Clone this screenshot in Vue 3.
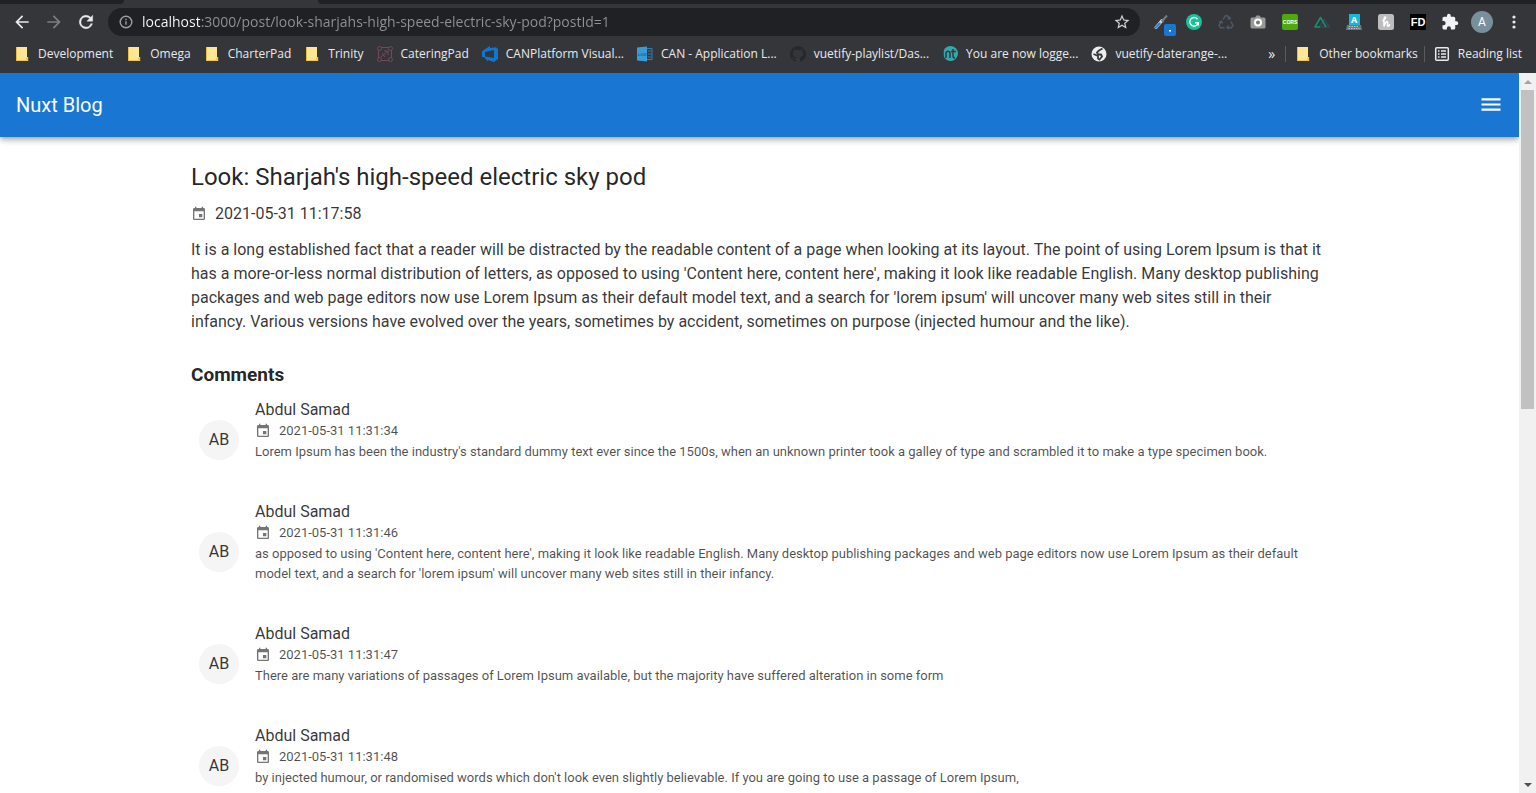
<script setup>
import { ref } from 'vue'

const address = ref('localhost:3000/post/look-sharjahs-high-speed-electric-sky-pod?postId=1')

const bookmarks = [
  { label: 'Development', icon: 'folder' },
  { label: 'Omega', icon: 'folder' },
  { label: 'CharterPad', icon: 'folder' },
  { label: 'Trinity', icon: 'folder' },
  { label: 'CateringPad', icon: 'catering' },
  { label: 'CANPlatform Visual...', icon: 'devops' },
  { label: 'CAN - Application L...', icon: 'log' },
  { label: 'vuetify-playlist/Das...', icon: 'github' },
  { label: 'You are now logge...', icon: 'nt' },
  { label: 'vuetify-daterange-...', icon: 'globe' },
]

const extensions = ['picker', 'grammarly', 'recycle', 'camera', 'cors', 'nuxt', 'keyboard', 'honey', 'fd', 'puzzle']

const calendarPath =
  'M19,19H5V8H19M16,1V3H8V1H6V3H5C3.89,3 3,3.89 3,5V19A2,2 0 0,0 5,21H19A2,2 0 0,0 21,19V5C21,3.89 20.1,3 19,3H18V1M17,12H12V17H17V12Z'

const comments = [
  {
    name: 'Abdul Samad',
    date: '2021-05-31 11:31:34',
    text: "Lorem Ipsum has been the industry's standard dummy text ever since the 1500s, when an unknown printer took a galley of type and scrambled it to make a type specimen book.",
  },
  {
    name: 'Abdul Samad',
    date: '2021-05-31 11:31:46',
    text: "as opposed to using 'Content here, content here', making it look like readable English. Many desktop publishing packages and web page editors now use Lorem Ipsum as their default model text, and a search for 'lorem ipsum' will uncover many web sites still in their infancy.",
  },
  {
    name: 'Abdul Samad',
    date: '2021-05-31 11:31:47',
    text: 'There are many variations of passages of Lorem Ipsum available, but the majority have suffered alteration in some form',
  },
  {
    name: 'Abdul Samad',
    date: '2021-05-31 11:31:48',
    text: "by injected humour, or randomised words which don't look even slightly believable. If you are going to use a passage of Lorem Ipsum,",
  },
]
</script>

<template>
  <div class="window">
    <header class="chrome">
      <div class="tabs"><span class="tab-left"></span><span class="tab-right"></span></div>
      <div class="toolbar">
        <nav class="nav" aria-label="History">
          <button class="tool" aria-label="Back">
            <svg width="20" height="20" viewBox="0 0 24 24"><path fill="#e8eaed" d="M20 11H7.8l5.6-5.6L12 4l-8 8 8 8 1.4-1.4L7.800 13H20z" /></svg>
          </button>
          <button class="tool" aria-label="Forward">
            <svg width="20" height="20" viewBox="0 0 24 24"><path fill="#7d7e81" d="M4 11h12.200l-5.600-5.600L12 4l8 8-8 8-1.400-1.400 5.600-5.600H4z" /></svg>
          </button>
          <button class="tool" aria-label="Reload">
            <svg width="20" height="20" viewBox="0 0 24 24"><path fill="#e8eaed" stroke="#e8eaed" stroke-width=".5" d="M17.650 6.350A8 8 0 1 0 19.730 14h-2.080A6 6 0 1 1 12 6c1.660 0 3.140.690 4.220 1.780L13 11h7V4z" /></svg>
          </button>
        </nav>
        <div class="omnibox">
          <svg width="16" height="16" viewBox="0 0 16 16"><circle cx="8" cy="8" r="5.800" fill="none" stroke="#9aa0a6" stroke-width="1.400" /><path fill="#9aa0a6" d="M7.300 7.200h1.400v3.600H7.300zM7.300 4.800h1.400v1.400H7.300z" /></svg>
          <input v-model="address" class="address" type="text" aria-label="Address" spellcheck="false" />
          <button class="star" aria-label="Bookmark this page">
            <svg width="18" height="18" viewBox="0 0 24 24"><path fill="#d0d2d5" d="M22 9.240l-7.190-.620L12 2 9.190 8.630 2 9.240l5.460 4.730L5.820 21 12 17.270 18.180 21l-1.630-7.030zM12 15.400l-3.760 2.270 1-4.280-3.320-2.880 4.380-.380L12 6.100l1.710 4.040 4.380.380-3.320 2.880 1 4.280z" /></svg>
          </button>
        </div>
        <div class="extensions">
          <button v-for="ext in extensions" :key="ext" class="tool" :aria-label="ext">
            <svg v-if="ext === 'picker'" width="28" height="28" viewBox="0 0 28 28"><path d="M8 19.500L14 12.500" stroke="#c9e2f7" stroke-width="3" stroke-linecap="round" /><path d="M8 19.500L11.500 15.500" stroke="#3b82c4" stroke-width="2.400" stroke-linecap="round" /><path d="M13.500 12l2 2M15 12l4-4.500" stroke="#777b7e" stroke-width="2" /><rect x="16" y="16" width="12" height="12" rx="2" fill="#1976d2" /><path d="M21 22h2v1.500h-2z" fill="#fff" /></svg>
            <svg v-else-if="ext === 'grammarly'" width="16" height="16" viewBox="0 0 16 16"><circle cx="8" cy="8" r="8" fill="#15c39a" /><path d="M11.500 5.200A4.300 4.300 0 1 0 12.300 8.700H9M12.300 8.700v2.800" fill="none" stroke="#fff" stroke-width="1.400" /></svg>
            <svg v-else-if="ext === 'recycle'" width="16" height="16" viewBox="0 0 16 16"><path d="M5 5.500L7.500 1.800h2L11.500 5M9.500 5H12V2.500M13 7.500l2 4-1.500 2.200H9.500M11 11.500l-2 2 2 1.500M6.500 13.700h-4L1 11.500l2.200-4M1 8.200l2.400-1 1.200 2.300" fill="none" stroke="#4b5867" stroke-width="1.500" /></svg>
            <svg v-else-if="ext === 'camera'" width="16" height="16" viewBox="0 0 16 16"><path d="M2 3.500h3L6.500 1.500h3L11 3.500h3a1.500 1.500 0 0 1 1.500 1.500v8a1.500 1.500 0 0 1-1.500 1.500H2A1.500 1.500 0 0 1 .5 13V5A1.500 1.500 0 0 1 2 3.500z" fill="#999" /><circle cx="8" cy="8.500" r="4" fill="#fff" /><circle cx="8" cy="8.500" r="2" fill="#777" /></svg>
            <span v-else-if="ext === 'cors'" class="badge cors">CORS</span>
            <svg v-else-if="ext === 'nuxt'" width="18" height="16" viewBox="0 0 18 16"><path d="M6 13l5-7.500L16.500 13z" fill="none" stroke="#2f495e" stroke-width="1.500" stroke-linejoin="round" /><path d="M7 13H2L7.500 3.500 13 13" fill="none" stroke="#14936b" stroke-width="1.500" stroke-linejoin="round" /></svg>
            <span v-else-if="ext === 'keyboard'" class="keyboard"><span class="key-letter">A</span><svg width="16" height="5" viewBox="0 0 16 5"><path d="M1 0h14l1 5H0z" fill="#687984" /><path d="M3 1.500h10M2.500 3.500h11" stroke="#b9c5cb" stroke-dasharray="1.500 1" /></svg></span>
            <svg v-else-if="ext === 'honey'" width="16" height="16" viewBox="0 0 16 16"><rect width="16" height="16" rx="2.500" fill="#bdbdbd" /><path d="M5 6.500c2-.5 3.500-3.500 2-3.500S6 9 6 12.500C7 9 8.500 7 9.500 7.800S8.500 12 10 12.200c.8 0 1.300-.8 1.500-1.500" fill="none" stroke="#fff" stroke-width="1.500" stroke-linecap="round" /></svg>
            <span v-else-if="ext === 'fd'" class="badge fd">FD</span>
            <svg v-else width="18" height="18" viewBox="0 0 24 24"><path fill="#f1f3f4" d="M20.500 11H19V7a2 2 0 0 0-2-2h-4V3.500a2.500 2.500 0 0 0-5 0V5H4a2 2 0 0 0-2 2v3.800h1.500a2.700 2.700 0 0 1 0 5.400H2V20c0 1.100.9 2 2 2h3.800v-1.500a2.700 2.700 0 0 1 5.400 0V22H17a2 2 0 0 0 2-2v-4h1.500a2.500 2.500 0 0 0 0-5z" /></svg>
          </button>
          <button class="tool" aria-label="Profile"><span class="profile">A</span></button>
          <button class="tool" aria-label="Browser menu">
            <svg width="4" height="16" viewBox="0 0 4 16"><circle cx="2" cy="3" r="1.600" fill="#e8eaed" /><circle cx="2" cy="8" r="1.600" fill="#e8eaed" /><circle cx="2" cy="13" r="1.600" fill="#e8eaed" /></svg>
          </button>
        </div>
      </div>

      <nav class="bookmarks" aria-label="Bookmarks">
        <a v-for="item in bookmarks" :key="item.label" href="#" class="bookmark">
          <svg width="16" height="16" viewBox="0 0 16 16" aria-hidden="true">
            <g v-if="item.icon === 'folder'"><path d="M2.500 1h10.500v14H2.500z" fill="#ffe694" /><path d="M2 1h1v14H2zM2.500 14.200H14V15H2.500z" fill="#e8bd45" /><path d="M13 11h1.200v4H11.800v-2z" fill="#f4ca4d" /></g>
            <g v-else-if="item.icon === 'catering'" fill="none" stroke="#75485a"><path d="M4 1.500h8M4 14.500h8M1.500 4v8M14.500 4v8" /><circle cx="2.500" cy="2.500" r="2" /><circle cx="13.500" cy="2.500" r="2" /><circle cx="2.500" cy="13.500" r="2" /><circle cx="13.500" cy="13.500" r="2" /><path d="M4 11l7-6M7 5h4v4M5 7l3 4" /></g>
            <path v-else-if="item.icon === 'devops'" fill="#0a78d4" fill-rule="evenodd" d="M0 5.500L2.500 3.500 8 0v2l6-.800L16 3v10l-4 3-6-2v1.500L2 11H0zM3 6v4.500l9 1.500V4z" />
            <g v-else-if="item.icon === 'log'"><path d="M0 1.500L10 .5v15L0 14.500z" fill="#399bd9" /><path d="M10 2.500h5v11h-5M11 5h3M11 8h3M11 11h3" fill="none" stroke="#367eab" /><text x="1" y="10" font-size="4" font-weight="700" fill="#176292" font-family="Liberation Sans">LOG</text></g>
            <path v-else-if="item.icon === 'github'" fill="#24292e" d="M8 0a8 8 0 0 0-2.530 15.590c.4.070.550-.170.550-.380v-1.490c-2.010.370-2.530-.490-2.690-.940-.9-.230-.480-.940-.820-1.130-.280-.150-.680-.520-.010-.530.630-.010 1.080.580 1.230.820.720 1.210 1.870.870 2.330.660.070-.520.280-.870.510-1.070-1.780-.2-3.640-.890-3.640-3.950 0-.870.310-1.590.820-2.150-.080-.2-.360-1.020.080-2.120 0 0 .670-.210 2.200.820a7.600 7.600 0 0 1 4 0c1.530-1.040 2.200-.820 2.200-.820.440 1.100.160 1.920.080 2.120.510.560.820 1.270.820 2.150 0 3.070-1.870 3.750-3.650 3.950.290.250.540.730.540 1.480v2.200c0 .210.150.460.550.380A8 8 0 0 0 8 0z" />
            <g v-else-if="item.icon === 'nt'"><circle cx="8.500" cy="7.500" r="7.500" fill="#38a6ac" /><path d="M4 12V6.500Q6.500 4 8 6.500V12M11 3v7q0 2 2 2M9 5.500h5M1 3v9l2 3" fill="none" stroke="#293e43" stroke-width="1.500" /></g>
            <g v-else><circle cx="8" cy="8" r="7.500" fill="#eee" /><path d="M11.500 2.500L8 4.500 6 6.500 7 8.500h3l1 2-2.500 3-1.500-1V10L2.500 8" fill="none" stroke="#38393c" stroke-width="1.800" /></g>
          </svg>
          <span>{{ item.label }}</span>
        </a>
        <button class="more" aria-label="More bookmarks">»</button>
        <span class="divider"></span>
        <a href="#" class="bookmark other">
          <svg width="16" height="16" viewBox="0 0 16 16" aria-hidden="true"><path d="M2.500 1h10.500v14H2.500z" fill="#ffe694" /><path d="M2 1h1v14H2zM2.500 14.200H14V15H2.500z" fill="#e8bd45" /><path d="M13 11h1.200v4H11.800v-2z" fill="#f4ca4d" /></svg>
          <span>Other bookmarks</span>
        </a>
        <span class="divider"></span>
        <button class="bookmark reading">
          <svg width="16" height="16" viewBox="0 0 16 16" aria-hidden="true"><rect x="1.700" y="1.700" width="12.600" height="12.600" rx="1" fill="none" stroke="#e8eaed" stroke-width="1.500" /><path d="M4 5h1.500M7 5h5M4 8h1.500M7 8h5M4 11h1.500M7 11h5" stroke="#e8eaed" stroke-width="1.300" /></svg>
          <span>Reading list</span>
        </button>
      </nav>
    </header>

    <div class="viewport">
      <div class="page">
        <header class="app-bar">
          <a href="#" class="brand">Nuxt Blog</a>
          <button class="menu" aria-label="Open menu">
            <svg width="24" height="24" viewBox="0 0 24 24"><path fill="#fff" d="M2.500 5.300h19v2.200h-19zM2.500 10.400h19v2.200h-19zM2.500 15.500h19v2.200h-19z" /></svg>
          </button>
        </header>
        <main class="container">
          <article>
            <h1>Look: Sharjah's high-speed electric sky pod</h1>
            <div class="stamp">
              <svg width="16" height="16" viewBox="0 0 24 24"><path :d="calendarPath" /></svg>
              <time>2021-05-31 11:17:58</time>
            </div>
            <p class="body">It is a long established fact that a reader will be distracted by the readable content of a page when looking at its layout. The point of using Lorem Ipsum is that it has a more-or-less normal distribution of letters, as opposed to using 'Content here, content here', making it look like readable English. Many desktop publishing packages and web page editors now use Lorem Ipsum as their default model text, and a search for 'lorem ipsum' will uncover many web sites still in their infancy. Various versions have evolved over the years, sometimes by accident, sometimes on purpose (injected humour and the like).</p>
          </article>
          <section>
            <h2>Comments</h2>
            <ul class="comments">
              <li v-for="comment in comments" :key="comment.date" class="comment">
                <span class="avatar">AB</span>
                <div class="comment-body">
                  <h3>{{ comment.name }}</h3>
                  <div class="stamp small">
                    <svg width="16" height="16" viewBox="0 0 24 24"><path :d="calendarPath" /></svg>
                    <time>{{ comment.date }}</time>
                  </div>
                  <p>{{ comment.text }}</p>
                </div>
              </li>
            </ul>
          </section>
        </main>
      </div>
      <div class="scrollbar" aria-hidden="true">
        <svg width="17" height="17" viewBox="0 0 17 17"><path fill="#a3a3a3" d="M5 11l4-4 4 4z" /></svg>
        <div class="track"><div class="thumb"></div></div>
        <svg width="17" height="17" viewBox="0 0 17 17"><path fill="#505050" d="M5 7h8l-4 4z" /></svg>
      </div>
    </div>
  </div>
</template>

<style>
body {
  margin: 0;
  overflow: hidden;
}
</style>

<style scoped>
.window {
  display: flex;
  flex-direction: column;
  height: 100vh;
  overflow: hidden;
  background: #fff;
  color: rgba(0, 0, 0, 0.87);
  font-family: Roboto, sans-serif;
}
button {
  margin: 0;
  padding: 0;
  border: 0;
  background: none;
  color: inherit;
  font: inherit;
}
a {
  color: inherit;
  text-decoration: none;
}
svg {
  display: block;
  flex: none;
}
h1, h2, h3, p, ul {
  margin: 0;
  padding: 0;
}
.chrome {
  flex: none;
  background: #35363a;
  color: #e8eaed;
  font-family: "Open Sans", "Noto Sans", sans-serif;
}
.tabs {
  display: flex;
  justify-content: space-between;
  height: 4px;
}
.tab-left {
  width: 124px;
  background: #202124;
  border-bottom-right-radius: 4px;
}
.tab-right {
  width: calc(100% - 318px);
  background: #202124;
  border-bottom-left-radius: 4px;
}
.toolbar {
  display: flex;
  align-items: center;
  gap: 6px;
  height: 36px;
  padding: 0 6px;
}
.nav, .extensions {
  display: flex;
}
.tool {
  display: flex;
  align-items: center;
  justify-content: center;
  width: 32px;
  height: 32px;
}
.omnibox {
  display: flex;
  align-items: center;
  gap: 8px;
  flex: 1;
  min-width: 0;
  height: 28px;
  padding: 0 9px 0 10px;
  border-radius: 14px;
  background: #202124;
}
.address {
  flex: 1;
  min-width: 0;
  padding: 0;
  border: 0;
  outline: 0;
  background: linear-gradient(90deg, #fff 58px, #8f9398 58px);
  background-clip: text;
  -webkit-background-clip: text;
  color: transparent;
  font: 14px/20px "Open Sans", "Noto Sans", sans-serif;
}
.badge {
  display: flex;
  align-items: center;
  justify-content: center;
  width: 16px;
  height: 16px;
  color: #fff;
  font-family: "Liberation Sans", sans-serif;
  font-weight: 700;
}
.cors {
  border-radius: 2px;
  background: #50a80c;
  font-size: 5px;
}
.fd {
  background: #000;
  font-size: 11px;
}
.keyboard {
  display: flex;
  flex-direction: column;
  align-items: center;
}
.key-letter {
  width: 11px;
  background: #18b8d8;
  color: #fff;
  font-size: 9px;
  font-weight: 700;
  line-height: 11px;
  text-align: center;
}
.profile {
  width: 22px;
  border-radius: 50%;
  background: #78909c;
  color: #fff;
  font: 12px/22px Roboto, sans-serif;
}
.bookmarks {
  display: flex;
  align-items: flex-start;
  box-sizing: border-box;
  height: 33px;
  padding: 6px 14px 0;
  font-size: 12px;
  line-height: 16px;
  white-space: nowrap;
}
.bookmark {
  display: flex;
  gap: 8px;
  margin-right: 13px;
}
.more {
  margin-left: auto;
  margin-right: 10px;
  font-size: 14px;
}
.divider {
  width: 1px;
  height: 16px;
  margin-right: 9px;
  background: #5a5b5e;
}
.other {
  margin-right: 6px;
}
.reading {
  margin-right: 0;
}
.viewport {
  display: flex;
  flex: 1;
  min-height: 0;
}
.page {
  flex: 1;
  min-width: 0;
  overflow: hidden;
}
.app-bar {
  display: flex;
  align-items: center;
  justify-content: space-between;
  height: 64px;
  padding: 0 16px;
  background: #1976d2;
  color: #fff;
  box-shadow: 0 2px 4px -1px rgba(0, 0, 0, 0.2), 0 4px 5px rgba(0, 0, 0, 0.14), 0 1px 10px rgba(0, 0, 0, 0.12);
}
.brand {
  font-size: 20px;
  line-height: 30px;
}
.container {
  box-sizing: border-box;
  max-width: 1185px;
  margin: 0 auto;
  padding: 24px;
}
h1 {
  font-size: 24px;
  font-weight: 400;
  line-height: 32px;
}
.stamp {
  display: flex;
  align-items: center;
  gap: 8px;
  margin-top: 9px;
  font-size: 16px;
  line-height: 24px;
  color: rgba(0, 0, 0, 0.8);
}
.stamp path {
  fill: #757575;
}
.body {
  margin-top: 12px;
  font-size: 16px;
  line-height: 24px;
  color: rgba(0, 0, 0, 0.8);
}
h2 {
  margin-top: 27px;
  font-size: 19px;
  font-weight: 700;
  line-height: 28px;
}
.comments {
  list-style: none;
}
.comment {
  display: flex;
  align-items: center;
  gap: 16px;
  padding: 0 8px;
}
.avatar {
  flex: none;
  width: 40px;
  border-radius: 50%;
  background: #f5f5f5;
  font-size: 16px;
  line-height: 40px;
  text-align: center;
  color: rgba(0, 0, 0, 0.8);
}
.comment-body {
  flex: 1;
  padding: 9px 0 29px;
}
h3 {
  font-size: 16px;
  font-weight: 400;
  line-height: 24px;
  color: rgba(0, 0, 0, 0.8);
}
.small {
  margin: 0 0 2px;
  font-size: 13px;
  line-height: 18px;
  color: rgba(0, 0, 0, 0.7);
}
.comment p {
  font-size: 13px;
  line-height: 20px;
  color: rgba(0, 0, 0, 0.7);
}
.scrollbar {
  display: flex;
  flex-direction: column;
  width: 17px;
  background: #f1f1f1;
}
.track {
  flex: 1;
}
.thumb {
  height: calc(100% * 20 / 43);
  margin: 0 2px;
  background: #c1c1c1;
}
</style>
